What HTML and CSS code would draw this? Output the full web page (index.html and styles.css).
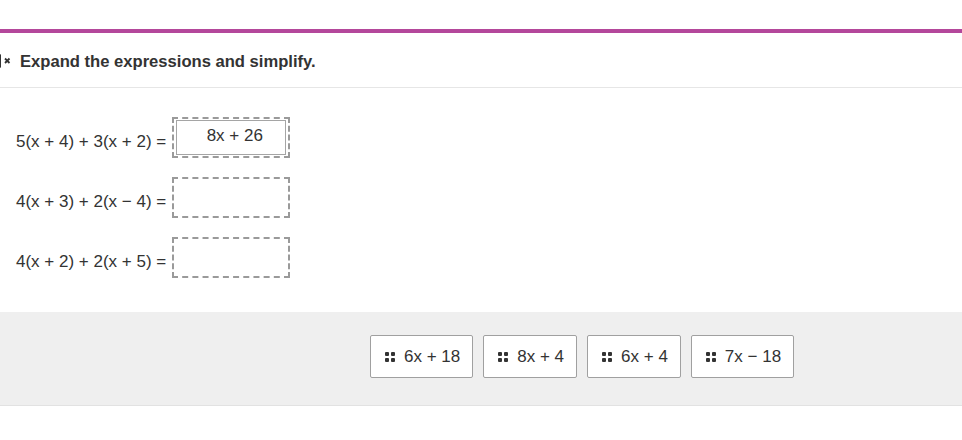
FILE: index.html
```html
<!DOCTYPE html>
<html lang="en">

<head>
    <meta charset="UTF-8">
    <meta name="viewport" content="width=device-width, initial-scale=1.0">
    <title>Expand the expressions</title>
    <link rel="stylesheet" href="styles.css">
</head>

<body>
    <div class="top"></div>
    <div class="question">
        <div class="header">
            <svg class="speaker" width="20" height="16" viewBox="0 0 20 16">
                <path d="M0 5 H4 L9 1 V15 L4 11 H0 Z" fill="#333" />
                <path d="M13 5.5 L17.5 10 M17.5 5.5 L13 10" stroke="#333" stroke-width="1.8" />
            </svg>
            <h2>Expand the expressions and simplify.</h2>
        </div>

        <div class="rows">
            <div class="row">
                <span class="expr">5(x + 4) + 3(x + 2) =</span>
                <div class="drop">
                    <div class="answer">8x + 26</div>
                </div>
            </div>
            <div class="row">
                <span class="expr">4(x + 3) + 2(x &minus; 4) =</span>
                <div class="drop"></div>
            </div>
            <div class="row">
                <span class="expr">4(x + 2) + 2(x + 5) =</span>
                <div class="drop"></div>
            </div>
        </div>

        <div class="tray">
            <div class="chip"><span class="grip"><i></i><i></i><i></i><i></i></span>6x + 18</div>
            <div class="chip"><span class="grip"><i></i><i></i><i></i><i></i></span>8x + 4</div>
            <div class="chip"><span class="grip"><i></i><i></i><i></i><i></i></span>6x + 4</div>
            <div class="chip"><span class="grip"><i></i><i></i><i></i><i></i></span>7x &minus; 18</div>
        </div>
    </div>
</body>

</html>
```

FILE: styles.css
```css
body {
    margin: 0;
    font-family: "Liberation Sans", Arial, sans-serif;
    color: #333;
    background: #fff;
}

.top {
    height: 29px;
}

.question {
    border-top: 4px solid #b4479b;
}

.header {
    height: 54px;
    display: flex;
    align-items: center;
    border-bottom: 1px solid #e6e6e6;
}

.speaker {
    margin-left: -8px;
    margin-right: 8px;
    margin-top: 2px;
}

.header h2 {
    margin: 0;
    font-size: 16.6px;
    font-weight: bold;
    padding-top: 4px;
}

.rows {
    padding: 29px 0 34px 16px;
    display: flex;
    flex-direction: column;
    gap: 19px;
}

.row {
    display: flex;
    align-items: center;
}

.expr {
    font-size: 17px;
    padding-top: 8px;
    margin-right: 6px;
}

.drop {
    width: 114px;
    height: 37px;
    border: 2px dashed #9a9a9a;
    display: flex;
    align-items: center;
    justify-content: center;
}

.answer {
    width: 110px;
    height: 35px;
    border: 1px solid #a5a5a5;
    background: #fff;
    font-size: 17px;
    display: flex;
    align-items: center;
    justify-content: center;
    padding: 0 0 3px 7px;
    box-sizing: border-box;
}

.tray {
    background: #efefef;
    border-bottom: 1px solid #e2e2e2;
    height: 70px;
    padding: 23px 0 0 370px;
    display: flex;
    align-items: flex-start;
    gap: 10px;
}

.chip {
    height: 41px;
    border: 1px solid #a0a0a0;
    border-radius: 2px;
    background: #fff;
    font-size: 17px;
    display: flex;
    align-items: center;
    padding: 0 12px 0 14px;
}

.grip {
    display: grid;
    grid-template-columns: 4px 4px;
    gap: 2px;
    margin-right: 9px;
}

.grip i {
    width: 4px;
    height: 4px;
    background: #333;
    border-radius: 1px;
}
```
